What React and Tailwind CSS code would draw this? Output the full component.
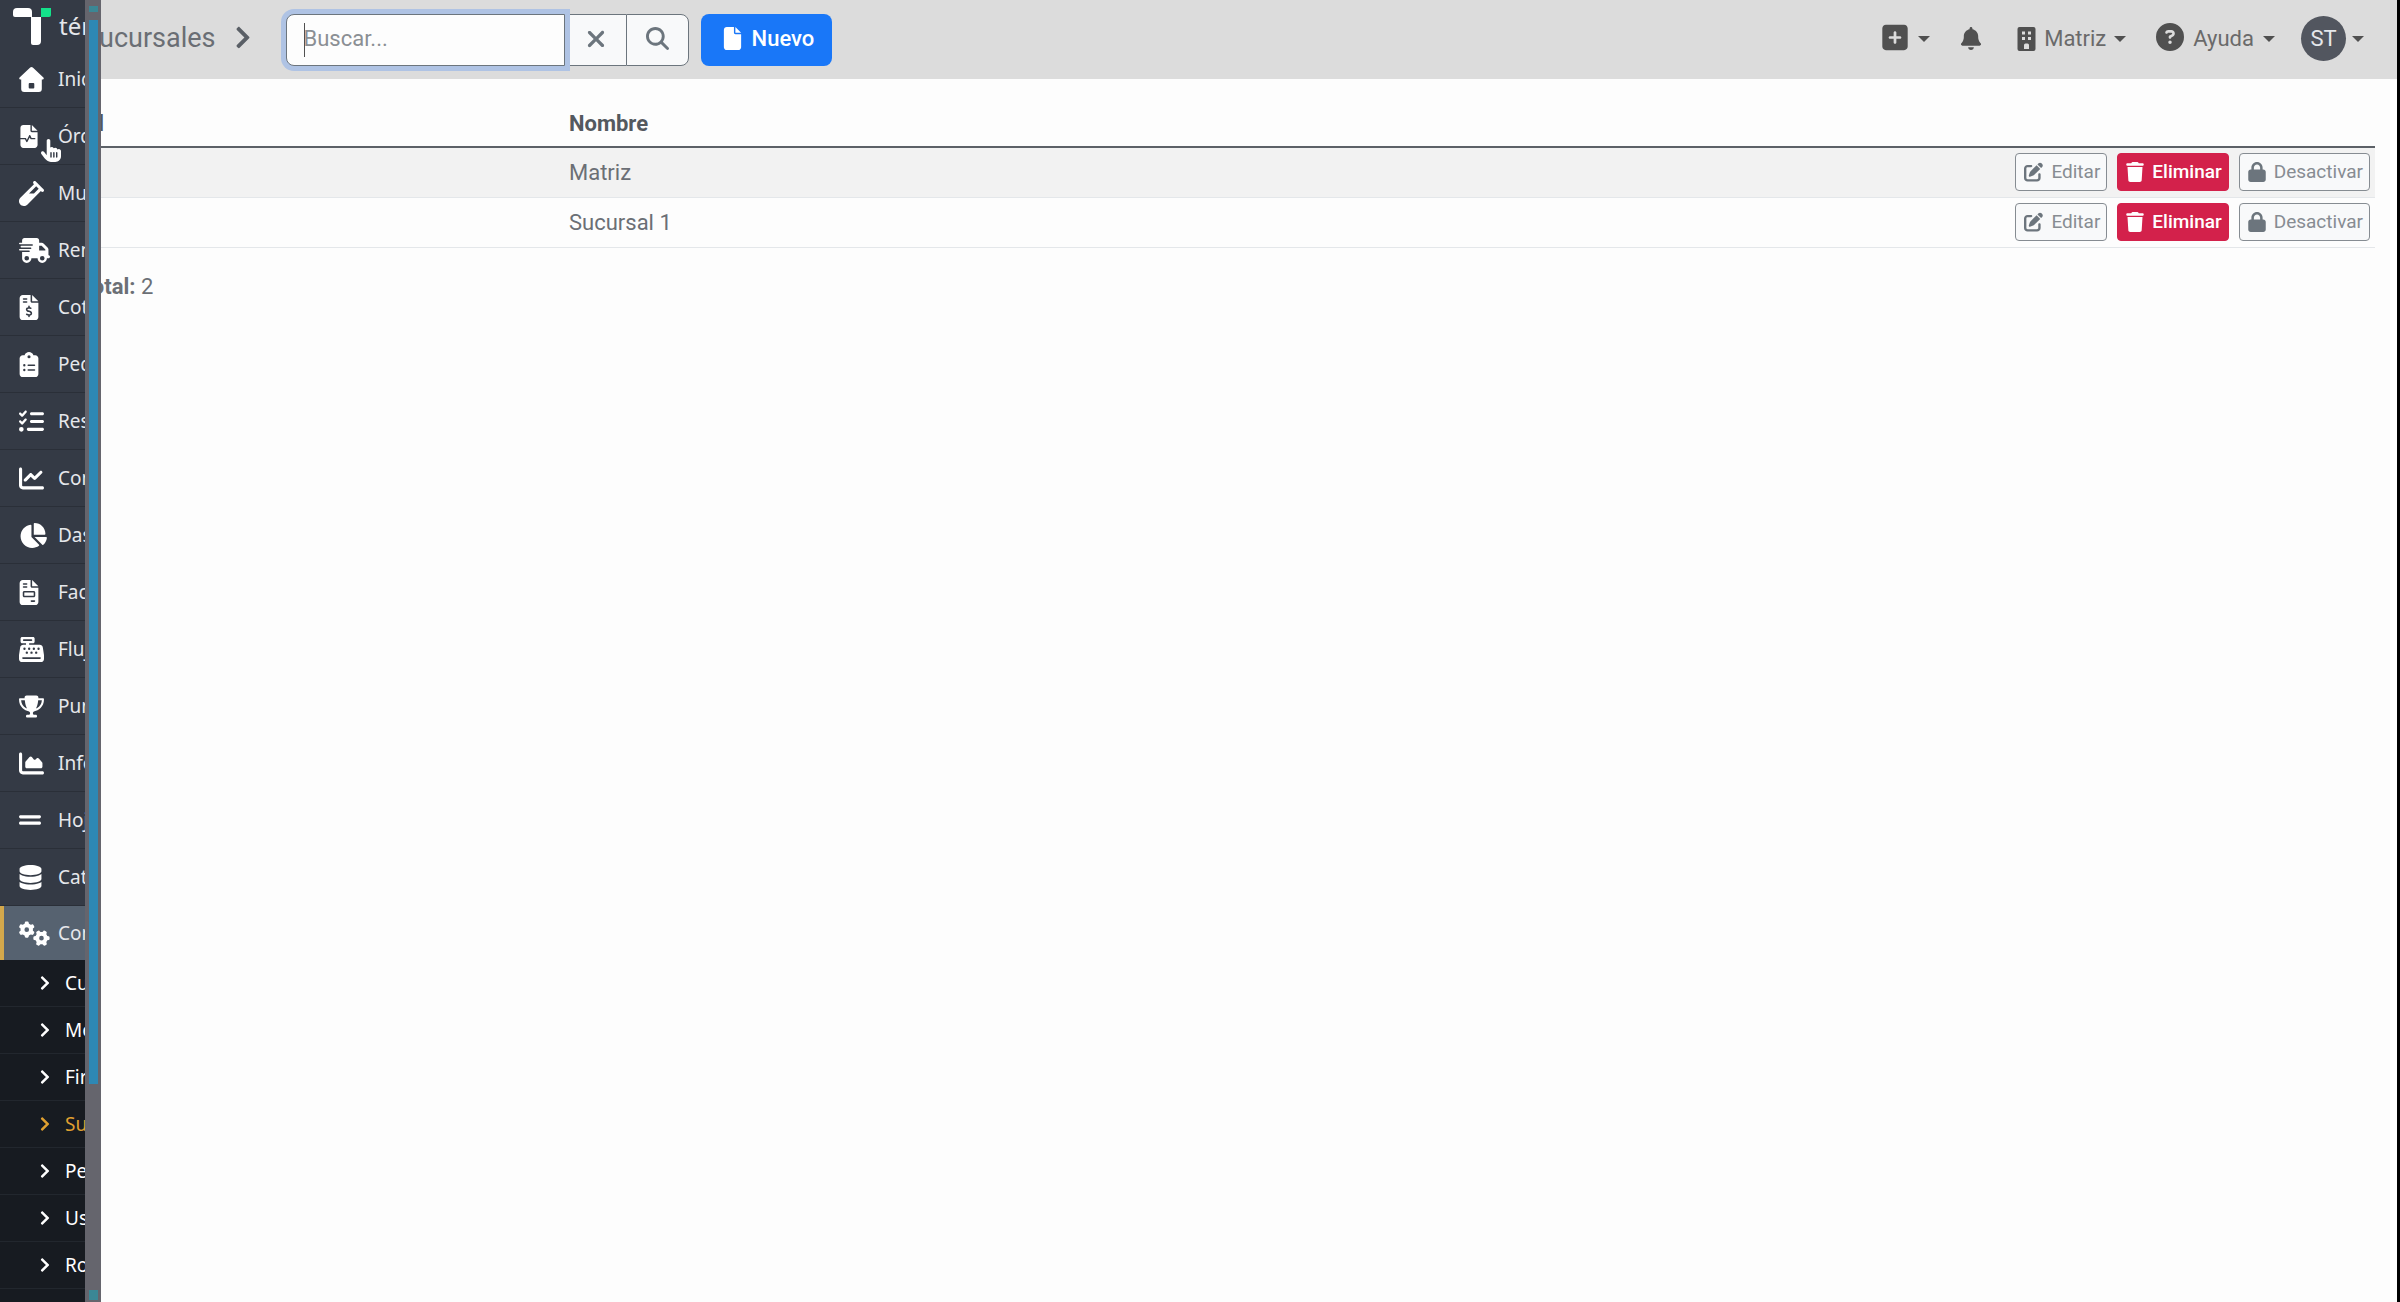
import { FaChevronRight } from "react-icons/fa";
import {
  FaBell,
  FaCashRegister,
  FaChartArea,
  FaChartLine,
  FaChartPie,
  FaCircleQuestion,
  FaClipboardList,
  FaDatabase,
  FaFile,
  FaFileInvoice,
  FaFileInvoiceDollar,
  FaFileWaveform,
  FaGears,
  FaGripLines,
  FaHandPointer,
  FaListCheck,
  FaLock,
  FaMagnifyingGlass,
  FaPenToSquare,
  FaSquarePlus,
  FaTrash,
  FaTrophy,
  FaTruckFast,
  FaVial,
  FaXmark,
} from "react-icons/fa6";

function HomeIcon({ className }) {
  return (
    <svg viewBox="0 0 25 25" className={className} fill="currentColor" aria-hidden="true">
      <path
        fillRule="evenodd"
        d="M11.2.6q1.3-1.1 2.6 0L24.4 10.4q1 1.1-.3 2.1h-1.3V22q0 3-3 3H5.2q-3 0-3-3v-9.5H.9q-1.3-1-.3-2.1zM9.700 17v3.500q0 1 1 1h3.600q1 0 1-1V17q0-1-1-1h-3.600q-1 0-1 1z"
      />
    </svg>
  );
}

function BuildingIcon({ className }) {
  return (
    <svg viewBox="0 0 18 24" className={className} fill="currentColor" aria-hidden="true">
      <path
        fillRule="evenodd"
        d="M2 0h14q2 0 2 2v20q0 2-2 2H2q-2 0-2-2V2Q0 0 2 0zM4.500 4.500v3h3v-3zM10.500 4.500v3h3v-3zM4.500 10v3h3v-3zM10.500 10v3h3v-3zM6.500 22v-4q0-1.500 1.500-1.500h2q1.500 0 1.500 1.500v4z"
      />
    </svg>
  );
}

const menu = [
  { label: "Inicio", icon: HomeIcon, size: "h-[25px] w-[25px]" },
  { label: "Órdenes", icon: FaFileWaveform, size: "h-[25px] w-5" },
  { label: "Muestras", icon: FaVial, size: "h-[25px] w-[25px]" },
  { label: "Remisiones", icon: FaTruckFast, size: "h-[25px] w-[31px]" },
  { label: "Cotizaciones", icon: FaFileInvoiceDollar, size: "h-[25px] w-5" },
  { label: "Pedidos", icon: FaClipboardList, size: "h-[25px] w-5" },
  { label: "Resultados", icon: FaListCheck, size: "h-[25px] w-[25px]" },
  { label: "Control", icon: FaChartLine, size: "h-[25px] w-[25px]" },
  { label: "Dashboard", icon: FaChartPie, size: "h-[25px] w-[28px]" },
  { label: "Facturas", icon: FaFileInvoice, size: "h-[25px] w-5" },
  { label: "Flujo", icon: FaCashRegister, size: "h-[25px] w-[25px]" },
  { label: "Puntos", icon: FaTrophy, size: "h-[25px] w-[25px]" },
  { label: "Informes", icon: FaChartArea, size: "h-[25px] w-[25px]" },
  { label: "Hojas", icon: FaGripLines, size: "h-[28px] w-[22px]" },
  { label: "Catálogos", icon: FaDatabase, size: "h-[25px] w-[23px]" },
  { label: "Configuración", icon: FaGears, size: "h-[29px] w-[31px]", active: true },
];

const submenu = [
  { label: "Cuenta" },
  { label: "Membretes" },
  { label: "Firmas" },
  { label: "Sucursales", active: true },
  { label: "Permisos" },
  { label: "Usuarios" },
  { label: "Roles" },
];

const branches = [
  { id: 1, name: "Matriz" },
  { id: 2, name: "Sucursal 1" },
];

function Logo() {
  return (
    <svg viewBox="0 0 38 38" className="h-[38px] w-[38px] shrink-0" aria-hidden="true">
      <path d="M4 0h11q4 0 4 4v5H2q-2 0-2-2V4q0-4 4-4z" fill="#fff" />
      <path d="M18 9h10v24q0 4-4 4h-4q-2 0-2-2z" fill="#fff" />
      <path d="M28 0h10v7q0 2-2 2h-8z" fill="#14e28a" />
    </svg>
  );
}

function Sidebar() {
  return (
    <aside className="relative flex w-[101px] shrink-0 bg-[#343a45] font-['Noto_Sans',sans-serif] text-white">
      <div className="w-[85px] overflow-hidden">
        <div className="flex h-[51px] items-start gap-2 pt-2 pl-[13px]">
          <Logo />
          <span className="text-[24px] leading-9 text-gray-200">términi</span>
        </div>
        <nav>
          {menu.map(({ label, icon: Icon, size, active }) => (
            <a
              key={label}
              href="#"
              className={
                active
                  ? "flex h-[54px] items-center border-l-4 border-[#d3a84c] bg-[#566270] pl-[15px]"
                  : "flex h-[57px] items-center border-b border-[#2a2f38] pl-[19px]"
              }
            >
              <span className="flex w-[39px] shrink-0">
                <Icon className={size} />
              </span>
              <span className="text-[19px] whitespace-nowrap text-gray-200">{label}</span>
            </a>
          ))}
          <div className="min-h-[342px] bg-[#171b21]">
            {submenu.map(({ label, active }) => (
              <a
                key={label}
                href="#"
                className={
                  active
                    ? "flex h-[47px] items-center gap-3 border-b border-[#22272e] pl-[37px] text-[#e0a030]"
                    : "flex h-[47px] items-center gap-3 border-b border-[#22272e] pl-[37px]"
                }
              >
                <FaChevronRight className="h-4 w-4 shrink-0" />
                <span className="text-[19px] whitespace-nowrap">{label}</span>
              </a>
            ))}
          </div>
        </nav>
      </div>
      <div className="flex w-4 flex-col bg-[#65656d] px-1">
        <div className="mt-[6px] mb-2 h-[6px] w-[9px] bg-[#3b8795]" />
        <div className="h-[1064px] w-[9px] bg-[#2e88b4]" />
        <div className="mt-auto mb-[2px] h-[10px] w-[9px] bg-[#3b8795]" />
      </div>
      <FaHandPointer className="absolute top-[138px] left-[41px] h-[25px] w-5 text-white" />
    </aside>
  );
}

function Caret() {
  return <span className="border-x-[6px] border-t-[6px] border-x-transparent border-t-[#505050]" />;
}

function Header() {
  return (
    <header className="flex h-[79px] items-center justify-between bg-[#dcdcdc] pr-[33px] pl-[83px]">
      <div className="flex items-center">
        <h1 className="pb-[2px] text-[27px] text-[#6a6e74]">Sucursales</h1>
        <FaChevronRight className="mr-[33px] mb-1 ml-[17px] h-[25px] w-5 text-[#5a5f66]" />
        <form className="flex h-[52px]">
          <div className="relative flex">
            <input
              type="text"
              aria-label="Buscar"
              placeholder="Buscar..."
              className="w-[279px] rounded-l-lg border border-[#6c757d] bg-[#fdfdfd] px-[17px] pb-[2px] text-[22px] ring-[5px] ring-[#afc3e4] outline-none placeholder:text-[#8b8f94]"
            />
            <span className="absolute top-[9px] left-[18px] h-[34px] w-px bg-[#505050]" />
          </div>
          <button
            type="button"
            aria-label="Limpiar"
            className="ml-[5px] flex w-[56px] items-center justify-center border-y border-[#6c757d] bg-[#f8f9fa] pr-1 pb-[2px]"
          >
            <FaXmark className="h-[26px] w-[26px] text-[#6c757d]" />
          </button>
          <button
            type="submit"
            aria-label="Buscar sucursal"
            className="flex w-[63px] items-center justify-center rounded-r-lg border border-[#6c757d] bg-[#f8f9fa] pb-[2px]"
          >
            <FaMagnifyingGlass className="h-[23px] w-[23px] text-[#6c757d]" />
          </button>
        </form>
        <button
          type="button"
          className="ml-3 flex h-[52px] items-center gap-[10px] rounded-lg bg-[#1977f8] pr-[18px] pb-[2px] pl-[22px] text-[22px] font-medium text-white"
        >
          <FaFile className="h-[23px] w-[19px]" />
          Nuevo
        </button>
      </div>

      <div className="flex items-center pb-[2px] text-[22px] text-[#6a6a6a]">
        <button type="button" aria-label="Agregar" className="flex items-center gap-[10px]">
          <FaSquarePlus className="mb-[3px] h-[29px] w-[26px] text-[#505050]" />
          <Caret />
        </button>
        <button type="button" aria-label="Notificaciones" className="ml-[30px]">
          <FaBell className="h-[23px] w-[22px] text-[#505050]" />
        </button>
        <button type="button" className="ml-[35px] flex items-center gap-2">
          <BuildingIcon className="h-6 w-[19px] text-[#505050]" />
          Matriz
          <Caret />
        </button>
        <button type="button" className="ml-[30px] flex items-center gap-[9px]">
          <FaCircleQuestion className="mb-1 h-7 w-7 text-[#505050]" />
          Ayuda
          <Caret />
        </button>
        <button type="button" className="ml-[26px] flex items-center gap-[6px]">
          <span className="flex h-[45px] w-[45px] items-center justify-center rounded-full bg-[#52565f] text-gray-200">
            ST
          </span>
          <Caret />
        </button>
      </div>
    </header>
  );
}

function RowActions() {
  return (
    <div className="flex justify-end gap-[10px] text-[19px] text-[#878c92]">
      <button
        type="button"
        className="flex h-[38px] items-center gap-2 rounded-sm border border-[#868c92] bg-[#f8f9fa] pr-[6px] pl-2"
      >
        <FaPenToSquare className="h-5 w-[19px] text-[#6c757d]" />
        Editar
      </button>
      <button
        type="button"
        className="flex h-[38px] items-center gap-2 rounded-sm border border-[#d3214b] bg-[#d3214b] pr-[6px] pl-2 font-medium text-white"
      >
        <FaTrash className="h-5 w-[18px]" />
        Eliminar
      </button>
      <button
        type="button"
        className="flex h-[38px] items-center gap-2 rounded-sm border border-[#868c92] bg-[#f8f9fa] pr-[6px] pl-2"
      >
        <FaLock className="h-5 w-[18px] text-[#6c757d]" />
        Desactivar
      </button>
    </div>
  );
}

export default function App() {
  return (
    <div className="flex min-h-screen overflow-hidden border-r-[3px] border-black bg-[#fdfdfd] font-['Roboto',sans-serif]">
      <Sidebar />
      {/* the open menu covers the left edge of the page */}
      <div className="flex-1 overflow-hidden">
        <div className="-ml-[101px]">
          <Header />
          <main className="pr-[22px] pl-[78px] text-[22px] text-[#6b6f75]">
            <table className="w-full table-fixed border-collapse">
              <thead>
                <tr className="h-[68px] border-b-2 border-[#5c6167] text-left text-[#54595f]">
                  <th className="w-[483px] px-[7px] pt-[22px] font-bold">Id</th>
                  <th className="px-2 pt-[22px] font-bold">Nombre</th>
                  <th className="w-[380px]" />
                </tr>
              </thead>
              <tbody>
                {branches.map((branch) => (
                  <tr key={branch.id} className="h-[50px] border-b border-[#e4e7ea] odd:bg-[#f2f2f2]">
                    <td className="px-[7px]">{branch.id}</td>
                    <td className="px-2">{branch.name}</td>
                    <td className="pr-[5px]">
                      <RowActions />
                    </td>
                  </tr>
                ))}
              </tbody>
            </table>
            <p className="mt-[22px] pl-[2px]">
              <strong className="font-bold">Total:</strong> 2
            </p>
          </main>
        </div>
      </div>
    </div>
  );
}
